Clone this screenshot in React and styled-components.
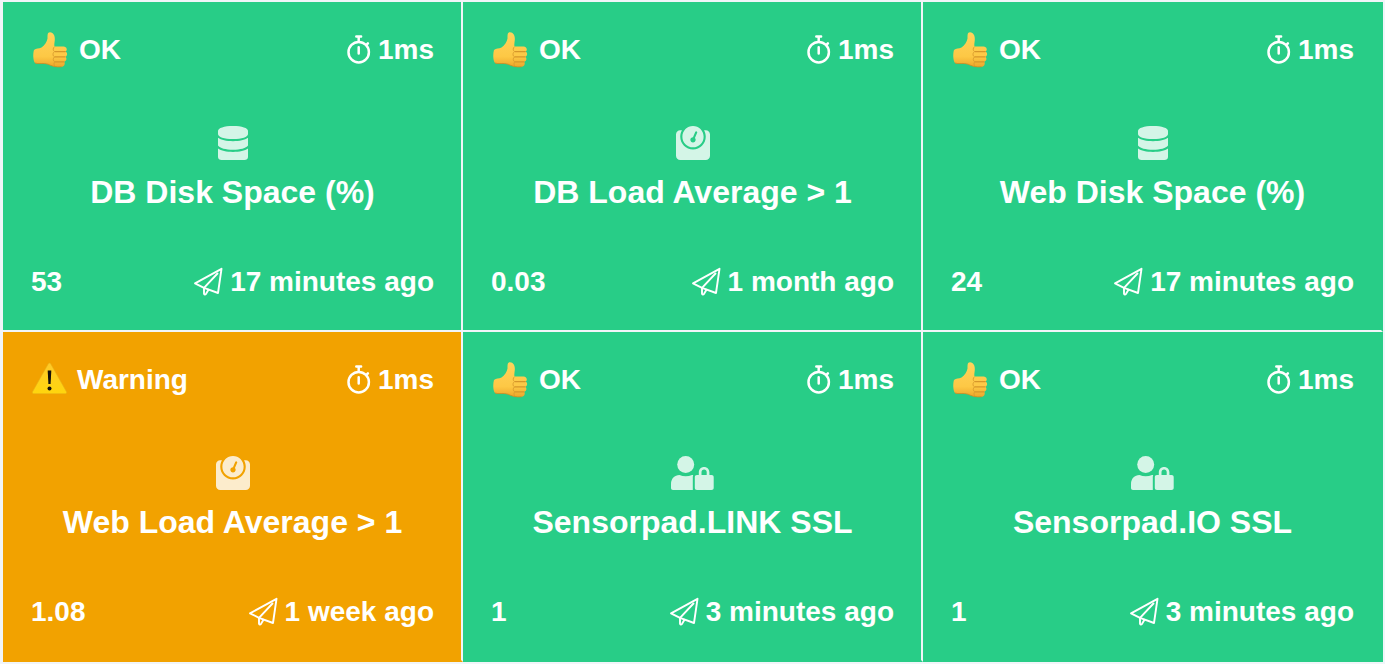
import React from "react";
import styled, { createGlobalStyle } from "styled-components";
import { FaWeight } from "react-icons/fa";

const GlobalStyle = createGlobalStyle`
  * { box-sizing: border-box; }
  body {
    margin: 0;
    background: #f1f5f9;
    color: #fff;
    font-family: "Liberation Sans", Arial, Helvetica, sans-serif;
  }
`;

const Board = styled.main`
  display: grid;
  grid-template-columns: repeat(3, minmax(0, 1fr));
  padding: 2px 2px 2px 3px;
`;

const Card = styled.article`
  display: flex;
  flex-direction: column;
  min-height: 330px;
  padding: 32px 27px 32px 28px;
  background: ${(p) => (p.$warning ? "#f2a200" : "#28cd87")};
  border: solid #f1f5f9;
  border-width: 0 2px 2px 0;

  &:nth-child(3n) { border-right-color: transparent; }
  &:nth-last-child(-n + 3) { border-bottom-color: transparent; }
`;

const Row = styled.div`
  display: flex;
  justify-content: space-between;
  height: 32px;
  font-size: 28px;
  font-weight: 700;
  line-height: 32px;
`;

const Item = styled.span`
  display: flex;
  align-items: center;
  gap: ${(p) => (p.$wide ? 8 : 7)}px;
  white-space: nowrap;

  svg { flex: none; }
`;

const Sensor = styled.div`
  display: flex;
  flex: 1;
  flex-direction: column;
  align-items: center;
  gap: 12px;
  padding-top: 60px;
`;

const SensorIcon = styled.span`
  display: flex;
  opacity: 0.8;

  svg {
    width: auto;
    height: 34px;
  }
`;

const Title = styled.h2`
  margin: 0;
  font-size: 32px;
  line-height: 40px;
  text-align: center;
`;

const ThumbIcon = () => (
  <svg width="40" height="38" viewBox="0 0 40 38" aria-hidden="true">
    <defs>
      <linearGradient id="skin" x1="0" y1="0" x2="0" y2="1">
        <stop offset="0" stopColor="#ffd35c" />
        <stop offset="0.7" stopColor="#fdc845" />
        <stop offset="1" stopColor="#eda62a" />
      </linearGradient>
    </defs>
    <path
      d="M3 19C5 17 8 17.800 10.500 16.500C13.500 14.500 16 11 16.500 7.500C16.600 4 16.300 1.200 19 1.200C22.500 1.200 24.200 5 23.800 9C23.600 11.500 23 13.500 23.500 15.500L32.500 15.500C36 15.500 36.800 19.500 34.500 20.500C36.800 21.500 36.600 25 34.300 25.800C36.200 27.200 35.600 30 33.300 30.700C34.500 33 33.300 35.600 30.500 35.800C25 36.300 20.500 35 17 33.200C12 31.500 8 33.500 4 32C2 29.500 1.800 23 3 19Z"
      fill="url(#skin)"
    />
    <path
      d="M24 20.600H34.300M24 25.900H34M24 30.800H33"
      stroke="#d6962a" strokeWidth="1.200" strokeLinecap="round" fill="none"
    />
    <path
      d="M23.500 15.700C21.800 17 21.800 19.500 23.500 20.600C21.500 22 21.600 24.800 23.500 25.900C21.800 27.300 21.900 30 23.800 30.800C22.600 32 22.700 34 24 35.200"
      stroke="#dc9f30" strokeWidth="1" fill="none"
    />
    <path d="M4 32C8 33.500 12 31.500 17 33.200C20.500 35 25 36.300 30.500 35.800" stroke="#d28a22" strokeWidth="0.800" fill="none" />
  </svg>
);

const WarningIcon = () => (
  <svg width="38" height="38" viewBox="0 0 38 38" aria-hidden="true">
    <defs>
      <linearGradient id="sign" x1="0" y1="0" x2="0" y2="1">
        <stop offset="0" stopColor="#ffc929" />
        <stop offset="1" stopColor="#ffd60d" />
      </linearGradient>
    </defs>
    <path
      d="M17.300 2.800C17.900 1.700 19.100 1.700 19.700 2.800L35.500 30.800C36 31.900 35.400 32.700 34.300 32.700H2.700C1.600 32.700 1 31.900 1.500 30.800Z"
      fill="url(#sign)" stroke="#e6ae16" strokeWidth="0.600"
    />
    <path d="M16.700 9.500H20.300L19.600 23H17.400Z" fill="#16110a" />
    <circle cx="18.500" cy="27.500" r="2" fill="#16110a" />
  </svg>
);

const StopwatchIcon = () => (
  <svg width="24" height="30" viewBox="0 0 24 30" fill="none" stroke="currentColor" strokeWidth="2.500" strokeLinecap="round" aria-hidden="true">
    <circle cx="11.700" cy="17.200" r="10.200" />
    <path d="M9.300 1.500H14.100M11.700 1.500V6.500M20.900 8.300L19.300 10M11.700 12.200V18.400" />
  </svg>
);

const PlaneIcon = () => (
  <svg width="30" height="30" viewBox="0 0 30 30" fill="none" stroke="currentColor" strokeWidth="1.900" strokeLinejoin="round" strokeLinecap="round" aria-hidden="true">
    <path d="M28.500 1.800L2 16.300L11 20.800L25 26Z" />
    <path d="M24.500 6.500L11 20.800V26.600C11.200 27.800 12.300 27.900 12.900 27L15.500 22.800" />
  </svg>
);

const DatabaseIcon = () => (
  <svg viewBox="0 0 30 34" fill="currentColor" aria-hidden="true">
    <path d="M0 5C0 2 6 0 15 0S30 2 30 5V8C30 11 24 13 15 13S0 11 0 8Z" />
    <path d="M0 11.800C3 14 8.500 15.200 15 15.200S27 14 30 11.800V19.500C28 22.300 22.500 23.700 15 23.700S2 22.300 0 19.500Z" />
    <path d="M0 22.600C3 24.800 8.500 26 15 26S27 24.800 30 22.600V31C30 33 28.500 34 26.500 34H3.500C1.500 34 0 33 0 31Z" />
  </svg>
);

const UserLockIcon = () => (
  <svg viewBox="0 0 43 34" fill="currentColor" aria-hidden="true">
    <circle cx="14.700" cy="8.600" r="8.500" />
    <path d="M8.500 19C12.500 20.800 17 20.800 21 19C21.500 19 21.900 19.100 22.200 19.300C21.900 20 21.800 20.600 21.800 21.300V34H2C0.800 34 0 33.200 0 32V28C0 22.800 3.500 19 8.500 19Z" />
    <path fillRule="evenodd" d="M27.800 19V16.300C27.800 13 30.100 10.900 33.100 10.900S38.400 13 38.400 16.300V19H40.500C41.900 19 42.700 19.800 42.700 21.200V31.800C42.700 33.200 41.900 34 40.500 34H26C24.600 34 23.800 33.200 23.800 31.800V21.200C23.800 19.800 24.600 19 26 19ZM30.500 19H35.700V16.300C35.700 14.600 34.600 13.600 33.100 13.600S30.500 14.600 30.500 16.300Z" />
  </svg>
);

const sensors = [
  { name: "DB Disk Space (%)", icon: DatabaseIcon, value: "53", ago: "17 minutes ago" },
  { name: "DB Load Average > 1", icon: FaWeight, value: "0.03", ago: "1 month ago" },
  { name: "Web Disk Space (%)", icon: DatabaseIcon, value: "24", ago: "17 minutes ago" },
  { name: "Web Load Average > 1", icon: FaWeight, value: "1.08", ago: "1 week ago", warning: true },
  { name: "Sensorpad.LINK SSL", icon: UserLockIcon, value: "1", ago: "3 minutes ago" },
  { name: "Sensorpad.IO SSL", icon: UserLockIcon, value: "1", ago: "3 minutes ago" },
];

function SensorCard({ name, icon: Icon, value, ago, warning }) {
  return (
    <Card $warning={warning}>
      <Row>
        <Item $wide>
          {warning ? <WarningIcon /> : <ThumbIcon />}
          {warning ? "Warning" : "OK"}
        </Item>
        <Item>
          <StopwatchIcon />
          1ms
        </Item>
      </Row>
      <Sensor>
        <SensorIcon><Icon /></SensorIcon>
        <Title>{name}</Title>
      </Sensor>
      <Row>
        <span>{value}</span>
        <Item>
          <PlaneIcon />
          {ago}
        </Item>
      </Row>
    </Card>
  );
}

export default function App() {
  return (
    <>
      <GlobalStyle />
      <Board>
        {sensors.map((s) => <SensorCard key={s.name} {...s} />)}
      </Board>
    </>
  );
}
